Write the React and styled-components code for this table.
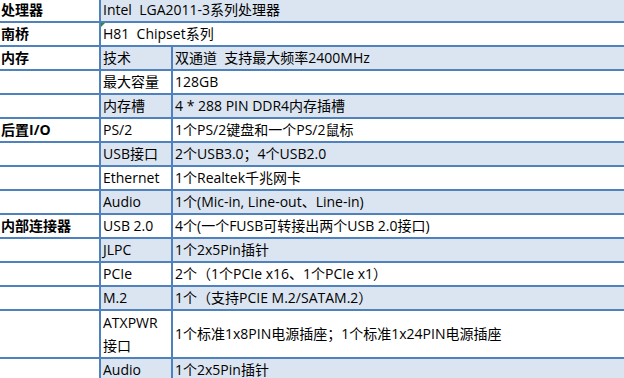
import React from "react";
import styled, { createGlobalStyle } from "styled-components";

const Global = createGlobalStyle`
  html, body { margin: 0; padding: 0; background: #ffffff; }
  body { width: 624px; height: 378px; overflow: hidden; }
`;

const Sheet = styled.div`
  display: grid;
  grid-template-columns: 99px 70px 1fr;
  grid-auto-rows: minmax(22px, auto);
  gap: 2px;
  margin-top: -1px;
  background: #4f81bd;
  font-family: "Open Sans", "Noto Sans CJK SC", sans-serif;
  font-size: 14px;
  line-height: 22px;
  color: #000;
`;

const Cell = styled.div`
  position: relative;
  padding: 0 2px;
  background: ${(p) => (p.$shade ? "#dbe5f1" : "#ffffff")};
  grid-column: ${(p) => (p.$span ? "span 2" : "auto")};
  display: flex;
  align-items: center;
  white-space: nowrap;
`;

const HeadCell = styled(Cell)`
  background: #ffffff;
  font-weight: 700;
  padding-left: 1px;
`;

const WrapCell = styled(Cell)`
  white-space: normal;
  line-height: 23px;
`;

const Marker = styled.span`
  position: absolute;
  left: 0;
  top: 0;
  width: 0;
  height: 0;
  border-top: 4px solid #2e8b2e;
  border-right: 4px solid transparent;
`;

const rows = [
  { head: "处理器", value: "Intel\u00a0\u00a0LGA2011-3系列处理器", span: true },
  { head: "南桥", value: "H81\u00a0\u00a0Chipset系列", span: true, marker: true },
  { head: "内存", key: "技术", value: "双通道\u00a0\u00a0支持最大频率2400MHz" },
  { head: "", key: "最大容量", value: "128GB" },
  { head: "", key: "内存槽", value: "4 * 288 PIN DDR4内存插槽" },
  { head: "后置I/O", key: "PS/2", value: "1个PS/2键盘和一个PS/2鼠标" },
  { head: "", key: "USB接口", value: "2个USB3.0；4个USB2.0" },
  { head: "", key: "Ethernet", value: "1个Realtek千兆网卡" },
  { head: "", key: "Audio", value: "1个(Mic-in, Line-out、Line-in)" },
  { head: "内部连接器", key: "USB 2.0", value: "4个(一个FUSB可转接出两个USB 2.0接口)" },
  { head: "", key: "JLPC", value: "1个2x5Pin插针" },
  { head: "", key: "PCIe", value: "2个（1个PCIe x16、1个PCIe x1）" },
  { head: "", key: "M.2", value: "1个（支持PCIE M.2/SATAM.2）" },
  { head: "", key: ["ATXPWR", "接口"], value: "1个标准1x8PIN电源插座；1个标准1x24PIN电源插座" },
  { head: "", key: "Audio", value: "1个2x5Pin插针" },
];

export default function App() {
  return (
    <>
      <Global />
      <Sheet>
        {rows.map((r, i) => {
          const shade = i % 2 === 0;
          return (
            <React.Fragment key={i}>
              <HeadCell>{r.head}</HeadCell>
              {r.span ? (
                <Cell $shade={shade} $span>
                  {r.marker && <Marker />}
                  {r.value}
                </Cell>
              ) : (
                <>
                  {Array.isArray(r.key) ? (
                    <WrapCell $shade={shade}>
                      {r.key[0]}
                      <br />
                      {r.key[1]}
                    </WrapCell>
                  ) : (
                    <Cell $shade={shade}>{r.key}</Cell>
                  )}
                  <Cell $shade={shade}>{r.value}</Cell>
                </>
              )}
            </React.Fragment>
          );
        })}
      </Sheet>
    </>
  );
}
